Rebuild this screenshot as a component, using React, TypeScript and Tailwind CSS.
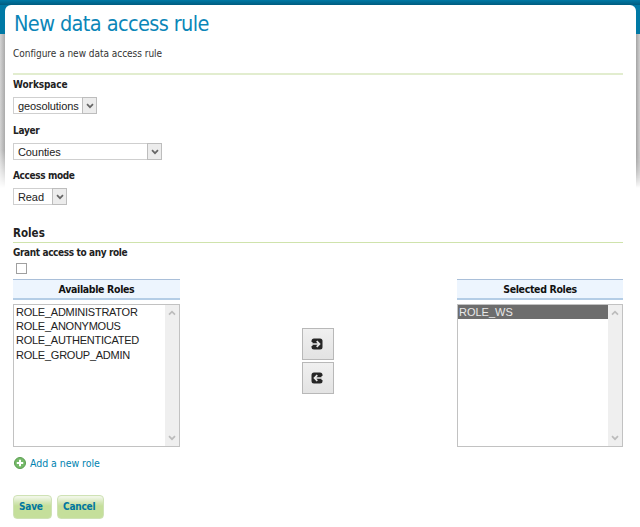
import React from "react";

const label = "font-bold text-[10px] text-[#222] leading-[14px] whitespace-nowrap";

function Chevron({ up = false, className = "" }: { up?: boolean; className?: string }) {
  return (
    <svg className={className} width="8" height="6" viewBox="0 0 8 6" fill="none" stroke="currentColor" strokeWidth="1.7">
      <path d={up ? "M1 4.7 4 1.7 7 4.7" : "M1 1.2 4 4.2 7 1.2"} />
    </svg>
  );
}

function Picker({ text, box, tracking }: { text: string; box: string; tracking: string }) {
  return (
    <div className={`flex h-[17px] border border-[#cfcfcf] bg-white ${box}`}>
      <span className={`flex-1 whitespace-nowrap pl-[4px] font-['Liberation_Sans',Arial,sans-serif] text-[11px] leading-[16px] text-[#222] ${tracking}`}>
        {text}
      </span>
      <span className="-my-px -mr-px flex h-[17px] w-[15px] items-center justify-center border border-[#bdbdbd] bg-[#ececec] text-[#666]">
        <Chevron />
      </span>
    </div>
  );
}

function RoleList({ title, roles, box, selected = false }: { title: string; roles: string[]; box: string; selected?: boolean }) {
  return (
    <div className={box}>
      <div className="h-[21px] border-t border-b-2 border-t-[#a9bfd9] border-b-[#b4cde6] bg-[#edf5fe] text-center text-[10.5px] font-bold leading-[19px] tracking-[-0.35px] text-[#111]">
        {title}
      </div>
      <div className="mt-[4px] flex h-[143px] border border-[#c2c2c2] bg-white">
        <div className={`flex-1 font-['Liberation_Sans',Arial,sans-serif] text-[11px] leading-[14px] text-[#222] ${selected ? "" : "tracking-[-0.25px]"}`}>
          {roles.map((r) => (
            <div key={r} className={`h-[14.2px] whitespace-nowrap ${selected ? "bg-[#6d6d6d] pl-px text-[#e8e8e8]" : "pl-[2px]"}`}>
              {r}
            </div>
          ))}
        </div>
        <div className="flex w-[14px] flex-col items-center justify-between bg-[#efefef] py-[5px] text-[#bcbcbc]">
          <Chevron up />
          <Chevron />
        </div>
      </div>
    </div>
  );
}

function MoveButton({ back = false }: { back?: boolean }) {
  return (
    <button className="flex h-[32px] w-[32px] items-center justify-center border border-[#b8b8b8] bg-linear-to-b from-[#f0f0f0] to-[#e3e3e3] pr-[2px]">
      <svg width="12" height="12" viewBox="0 0 12 12" className={back ? "-scale-x-100" : ""}>
        <rect x="0.5" y="0.5" width="11" height="11" rx="2.500" fill="#262626" />
        <path d="M0 4h1.500v4H0Z" fill="#e9e9e9" />
        <path d="M0.500 6h8M5.700 3.200 8.500 6 5.700 8.800" fill="none" stroke="#e9e9e9" strokeWidth="1.700" />
      </svg>
    </button>
  );
}

function ActionButton({ text, box }: { text: string; box: string }) {
  return (
    <button className={`h-[24px] rounded-[4px] border border-[#cfe2b5] bg-linear-to-b from-[#f0f6e6] from-5% via-[#d3e6b5] via-30% to-[#c5df9b] to-45% pl-[5px] text-left text-[10px] font-bold leading-[22px] tracking-[-0.2px] text-[#0076a1] ${box}`}>
      {text}
    </button>
  );
}

export default function App() {
  return (
    <div className="relative h-[527px] w-[640px] overflow-hidden bg-white font-['DejaVu_Sans_Condensed','DejaVu_Sans',sans-serif] [font-stretch:condensed]">
      <div className="absolute inset-x-0 top-0 h-[188px] bg-linear-to-r from-[#d4d4d4] to-[#aaa] to-[5px] mask-b-from-80% mask-b-to-100%" />
      <div className="absolute right-0 top-0 h-[188px] w-[5px] bg-linear-to-r from-[#999] to-[#d0d0d0] mask-b-from-80% mask-b-to-100%" />
      <div className="absolute inset-x-0 top-0 h-[34px] bg-[#0079a5]" />
      <div className="absolute inset-x-0 top-0 h-[5px] bg-linear-to-b from-[#0079a5] to-[#005c80]" />
      <main className="relative ml-[5px] mr-[4px] mt-[5px] h-[522px] rounded-t-[6px] bg-white pl-[8px] pr-[13px]">
        <h1 className="h-[41px] whitespace-nowrap pl-px pt-[5px] text-[21.5px] leading-[28px] tracking-[-0.6px] text-[#0b86b8]">New data access rule</h1>
        <p className="h-[28px] pt-px text-[10px] leading-[14px] tracking-[-0.03px] text-[#333]">Configure a new data access rule</p>
        <div className="-mt-px h-[2px] bg-[#e2edcf]" />
        <div className="flex h-[46px] flex-col pt-[3px]">
          <span className={`${label} tracking-[-0.1px]`}>Workspace</span>
          <Picker text="geosolutions" box="mt-[5px] w-[84px]" tracking="tracking-[-0.1px]" />
        </div>
        <div className="flex h-[45px] flex-col pt-[3px]">
          <span className={`${label} tracking-[-0.3px]`}>Layer</span>
          <Picker text="Counties" box="mt-[5px] w-[149px]" tracking="tracking-[-0.1px]" />
        </div>
        <div className="flex h-[61px] flex-col pt-[3px]">
          <span className={`${label} tracking-[-0.38px]`}>Access mode</span>
          <Picker text="Read" box="mt-[5px] w-[54px]" tracking="tracking-[-0.1px]" />
        </div>
        <h2 className="h-[16px] border-b border-[#cfe3ac] text-[11.5px] font-bold leading-[13px] text-[#222]">Roles</h2>
        <div className="h-[36px] pt-[3px]">
          <div className={`${label} tracking-[-0.38px]`}>Grant access to any role</div>
          <div className="ml-[3px] mt-[3px] h-[11px] w-[11px] border border-[#a0a0a0] bg-white" />
        </div>
        <div className="flex h-[168px]">
          <RoleList box="w-[167px]" title="Available Roles" roles={["ROLE_ADMINISTRATOR", "ROLE_ANONYMOUS", "ROLE_AUTHENTICATED", "ROLE_GROUP_ADMIN"]} />
          <div className="ml-[122px] mr-auto flex flex-col gap-[2px] pt-[49px]">
            <MoveButton />
            <MoveButton back />
          </div>
          <RoleList box="w-[166px]" title="Selected Roles" roles={["ROLE_WS"]} selected />
        </div>
        <a className="mt-[9px] flex h-[14px] items-center gap-[4px] pl-[1px] text-[10.5px] leading-[14px] tracking-[-0.05px] text-[#0083b0]">
          <svg width="12" height="12" viewBox="0 0 12 12">
            <circle cx="6" cy="6" r="5.500" fill="#75b969" stroke="#5b9e50" />
            <path d="M6 2.800v6.400M2.800 6h6.400" stroke="#fff" strokeWidth="2" />
          </svg>
          Add a new role
        </a>
        <div className="mt-[25px] flex gap-[5px]">
          <ActionButton text="Save" box="w-[39px]" />
          <ActionButton text="Cancel" box="w-[47px]" />
        </div>
      </main>
    </div>
  );
}
